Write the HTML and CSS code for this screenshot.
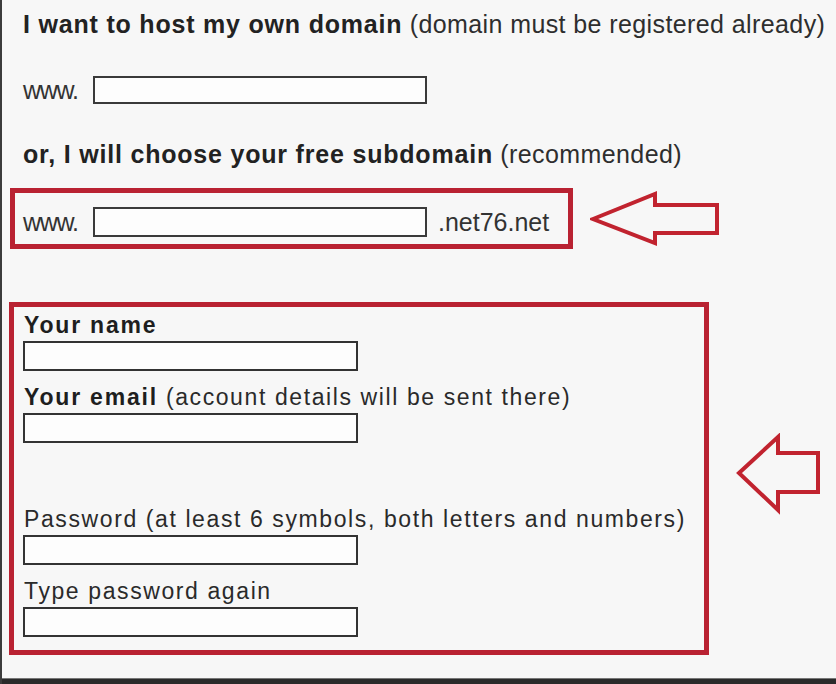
FILE: index.html
```html
<!DOCTYPE html>
<html lang="en">
<head>
    <meta charset="UTF-8">
    <meta name="viewport" content="width=device-width, initial-scale=1.0">
    <title>Hosting sign up</title>
    <link rel="stylesheet" href="styles.css">
</head>
<body>
    <div class="page">
        <p class="choice"><strong>I want to host my own domain</strong> (domain must be registered already)</p>

        <div class="domain-row own">
            <span class="prefix">www.</span>
            <input type="text" class="domain-input">
        </div>

        <p class="choice or-line"><strong>or, I will choose your free subdomain</strong> (recommended)</p>

        <div class="callout-row subdomain-row">
            <div class="domain-row highlight">
                <span class="prefix">www.</span>
                <input type="text" class="domain-input">
                <span class="suffix">.net76.net</span>
            </div>
            <svg class="arrow arrow-small" width="130" height="57" viewBox="0 0 130 57">
                <path d="M3 29 L65 4 L65 15 L127 15 L127 43 L65 43 L65 53 Z" />
            </svg>
        </div>

        <div class="callout-row account-row">
            <form class="account highlight">
                <div class="field">
                    <label for="name"><b>Your name</b></label>
                    <input type="text" id="name">
                </div>
                <div class="field">
                    <label for="email"><b>Your email</b> (account details will be sent there)</label>
                    <input type="email" id="email">
                </div>
                <div class="field spaced">
                    <label for="pass">Password (at least 6 symbols, both letters and numbers)</label>
                    <input type="password" id="pass">
                </div>
                <div class="field">
                    <label for="pass2">Type password again</label>
                    <input type="password" id="pass2">
                </div>
            </form>
            <svg class="arrow arrow-big" width="88" height="82" viewBox="0 0 88 82">
                <path d="M4 40 L43 4 L43 20 L83 20 L83 59 L43 59 L43 77 Z" />
            </svg>
        </div>

        <div class="bottom-bar"></div>
    </div>
</body>
</html>
```

FILE: styles.css
```css
body {
    margin: 0;
    background-color: #f7f7f7;
    font-family: "Liberation Sans", Arial, sans-serif;
    color: #2e2e2e;
}

.page {
    height: 684px;
    box-sizing: border-box;
    border-left: 2px solid #3c3c3c;
    padding: 9px 0 0 8px;
    display: flex;
    flex-direction: column;
    overflow: hidden;
}

.choice {
    margin: 0 0 0 13px;
    font-size: 25px;
    line-height: 30px;
    letter-spacing: 0.4px;
    white-space: nowrap;
}

.choice strong {
    color: #222;
    letter-spacing: 0.8px;
}

.or-line {
    margin-top: 35px;
}

.domain-row {
    display: flex;
    align-items: center;
    font-size: 25px;
    line-height: 28px;
}

.domain-row.own {
    margin: 37px 0 0 13px;
}

.prefix {
    width: 70px;
    letter-spacing: -1.3px;
    color: #333;
}

.domain-input {
    width: 334px;
    height: 28px;
    box-sizing: border-box;
    border: 2px solid #3a3a3a;
    background: #fdfdfd;
    padding: 0;
    margin: 0;
}

.suffix {
    margin-left: 11px;
    color: #333;
}

.highlight {
    border: 5px solid #b92232;
    box-sizing: border-box;
}

.callout-row {
    display: flex;
    align-items: flex-start;
}

.subdomain-row {
    margin-top: 19px;
}

.account-row {
    margin-top: 53px;
}

.domain-row.highlight {
    width: 563px;
    height: 61px;
    padding: 7px 0 0 8px;
}

.domain-row.highlight .domain-input {
    height: 30px;
}

.arrow {
    flex-shrink: 0;
}

.arrow path {
    fill: none;
    stroke: #c1232f;
    stroke-width: 4;
    stroke-linejoin: miter;
}

.arrow-small {
    margin: 2px 0 0 17px;
}

.arrow-big {
    margin: 131px 0 0 26px;
}

.account {
    width: 700px;
    height: 353px;
    margin-left: -1px;
    padding: 0 0 0 9px;
}

.field label {
    display: block;
    margin: 6px 0 0 1px;
    font-size: 23px;
    line-height: 25px;
    letter-spacing: 1.6px;
    color: #2a2a2a;
    white-space: nowrap;
}

.field + .field label {
    margin-top: 14px;
}

.field.spaced label {
    margin-top: 64px;
}

.field label b {
    color: #1e1e1e;
    letter-spacing: 1.8px;
}

.field input {
    display: block;
    width: 335px;
    height: 30px;
    box-sizing: border-box;
    margin: 3px 0 0;
    border: 2px solid #333;
    background: #fdfdfd;
    padding: 0;
}

.bottom-bar {
    margin-top: auto;
    margin-left: -8px;
    height: 5px;
    background: #2a2a2a;
    border-top: 1px solid #777;
}
```
